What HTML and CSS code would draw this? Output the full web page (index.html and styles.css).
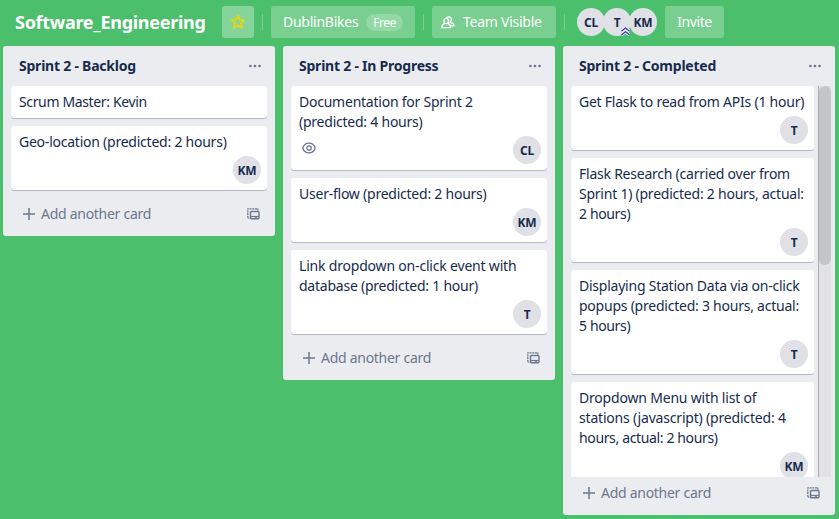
FILE: index.html
```html
<!DOCTYPE html>
<html lang="en">
<head>
<meta charset="utf-8">
<title>Software_Engineering</title>
<link rel="stylesheet" href="styles.css">
</head>
<body>
<svg class="defs" width="0" height="0">
  <symbol id="plus" viewBox="0 0 14 14"><path d="M7 1v12M1 7h12" fill="none" stroke="currentColor" stroke-width="1.5"/></symbol>
  <symbol id="template" viewBox="0 0 13 12"><g fill="none" stroke="currentColor"><path d="M.8 9.800V.8h10v2" stroke-width="1.2" stroke-dasharray="2 .7"/><path d="M.8 10h1.500" stroke-width="1.200"/><rect x="3.500" y="3.500" width="8.500" height="7.300" rx="1" stroke-width="1.4"/><path d="M3.500 8.500h8.500" stroke-width="1.2"/><path d="M8 9.700h2" stroke-width="1"/></g></symbol>
  <symbol id="dots" viewBox="0 0 14 4"><g fill="currentColor"><circle cx="2.4" cy="2" r="1.35"/><circle cx="7" cy="2" r="1.35"/><circle cx="11.6" cy="2" r="1.35"/></g></symbol>
</svg>
<header class="bar">
  <h1 class="board-name">Software_Engineering</h1>
  <button class="btn star"><svg width="16" height="16" viewBox="0 0 16 16"><path d="M8 1.600l1.800 4.200 4.500.4-3.400 3 1.100 4.600L8 11.400l-4 2.400 1.100-4.600-3.400-3 4.500-.4z" fill="none" stroke="#f2d600" stroke-width="1.600" stroke-linejoin="round"/></svg></button>
  <i class="sep"></i>
  <button class="btn org"><span class="org-name">DublinBikes</span><span class="free">Free</span></button>
  <i class="sep"></i>
  <button class="btn team"><svg width="14" height="13" viewBox="0 0 14 13"><g fill="none" stroke="currentColor" stroke-width="1.300" stroke-linejoin="round"><ellipse cx="5.200" cy="5" rx="2.300" ry="2.600"/><path d="M3.800 7.400C1.900 8 .8 9.300.8 11.600h8.800c0-2.300-1.100-3.600-3-4.200"/><path d="M5.300 2.200C6.200.2 10.300.3 10.300 3.500c0 1.300-.4 2.200-1.200 2.800 2.500.6 3.900 1.700 4 3.600H9.500"/></g></svg><span class="team-name">Team Visible</span></button>
  <i class="sep"></i>
  <div class="members">
    <span class="avatar">CL</span>
    <span class="avatar">T<svg class="admin" width="9" height="9" viewBox="0 0 9 9"><path d="M.5 4.300L4.500 1l4 3.300M.5 8L4.500 4.700l4 3.300" fill="none" stroke="#fff" stroke-width="3"/><path d="M.5 4.300L4.500 1l4 3.300M.5 8L4.500 4.700l4 3.300" fill="none" stroke="#3f43bd" stroke-width="1.400"/></svg></span>
    <span class="avatar">KM</span>
  </div>
  <button class="btn invite">Invite</button>
</header>
<main class="board">
  <section class="list">
    <header class="list-head"><h2>Sprint 2 - Backlog</h2><svg width="14" height="4"><use href="#dots"/></svg></header>
    <div class="cards">
      <article class="card"><p><span class="tight">Scrum Master: Kevin</span></p></article>
      <article class="card"><p><span>Geo-location (predicted: 2 hours)</span></p><div class="meta"><span class="avatar">KM</span></div></article>
    </div>
    <footer class="add"><svg width="14" height="14"><use href="#plus"/></svg><span>Add another card</span><svg class="tpl" width="13" height="12"><use href="#template"/></svg></footer>
  </section>
  <section class="list">
    <header class="list-head"><h2>Sprint 2 - In Progress</h2><svg width="14" height="4"><use href="#dots"/></svg></header>
    <div class="cards">
      <article class="card"><p><span>Documentation for Sprint 2</span><span>(predicted: 4 hours)</span></p><div class="meta"><svg class="eye" width="14" height="12" viewBox="0 0 14 12"><g fill="none" stroke="currentColor" stroke-width="1.300"><path d="M.8 6C1.800 2.900 4.100 1.100 7 1.100S12.200 2.900 13.200 6C12.200 9.100 9.900 10.900 7 10.900S1.800 9.100.8 6z"/><circle cx="7" cy="6" r="2.200"/></g></svg><span class="avatar">CL</span></div></article>
      <article class="card"><p><span>User-flow (predicted: 2 hours)</span></p><div class="meta"><span class="avatar">KM</span></div></article>
      <article class="card"><p><span class="loose">Link dropdown on-click event with</span><span>database (predicted: 1 hour)</span></p><div class="meta"><span class="avatar">T</span></div></article>
    </div>
    <footer class="add"><svg width="14" height="14"><use href="#plus"/></svg><span>Add another card</span><svg class="tpl" width="13" height="12"><use href="#template"/></svg></footer>
  </section>
  <section class="list">
    <header class="list-head"><h2>Sprint 2 - Completed</h2><svg width="14" height="4"><use href="#dots"/></svg></header>
    <div class="scroller">
      <div class="cards">
        <article class="card"><p><span>Get Flask to read from APIs (1 hour)</span></p><div class="meta"><span class="avatar">T</span></div></article>
        <article class="card"><p><span>Flask Research (carried over from</span><span>Sprint 1) (predicted: 2 hours, actual:</span><span class="tight">2 hours)</span></p><div class="meta"><span class="avatar">T</span></div></article>
        <article class="card"><p><span>Displaying Station Data via on-click</span><span>popups (predicted: 3 hours, actual:</span><span class="tight">5 hours)</span></p><div class="meta"><span class="avatar">T</span></div></article>
        <article class="card"><p><span class="loose">Dropdown Menu with list of</span><span class="loose">stations (javascript) (predicted: 4</span><span class="tight">hours, actual: 2 hours)</span></p><div class="meta"><span class="avatar">KM</span></div></article>
      </div>
      <div class="track"><div class="thumb"></div></div>
    </div>
    <footer class="add"><svg width="14" height="14"><use href="#plus"/></svg><span>Add another card</span><svg class="tpl" width="13" height="12"><use href="#template"/></svg></footer>
  </section>
</main>
</body>
</html>
```
FILE: styles.css
```css
* { box-sizing: border-box; }
body { margin: 0; height: 519px; overflow: hidden; background: #4bbf6b; color: #172b4d; font: 14px/20px "Noto Sans", "Open Sans", sans-serif; }
h1, h2, p { margin: 0; }
.defs { display: block; position: absolute; }
svg { display: block; flex: none; }
.bar { height: 46px; padding: 6px 0 8px 3px; display: flex; align-items: center; color: #fff; white-space: nowrap; }
.board-name { width: 219px; padding-left: 12px; font-size: 18px; line-height: 32px; font-weight: 700; letter-spacing: -.28px; }
.btn { height: 32px; border: 0; border-radius: 3px; padding: 0 12px; background: #78cf90; color: #fff; font: inherit; line-height: 32px; letter-spacing: -.25px; display: flex; align-items: center; flex: none; }
.star { width: 32px; padding: 0; justify-content: center; background: #87d49b; }
.sep { width: 1px; height: 16px; margin: 0 8px; background: #78cf90; flex: none; }
.org { width: 144px; }
.org-name { width: 83px; text-align: left; }
.free { width: 37px; height: 17px; border-radius: 9px; background: #93d9a6; font-size: 12px; line-height: 17px; letter-spacing: -.5px; text-align: center; flex: none; }
.team { width: 124px; padding-left: 9px; }
.team-name { margin-left: 8px; }
.members { display: flex; margin-left: 4px; width: 88px; }
.avatar { width: 28px; height: 28px; border-radius: 50%; background: #dfe1e6; color: #172b4d; font-size: 12px; line-height: 29px; font-weight: 700; letter-spacing: -.2px; text-align: center; position: relative; flex: none; }
.members .avatar { margin-right: -2px; }
.admin { position: absolute; right: 1px; bottom: 0; }
.invite { width: 59px; padding: 0; justify-content: center; letter-spacing: -.4px; }
.board { display: flex; align-items: flex-start; gap: 8px; padding-left: 3px; }
.list { width: 272px; flex: none; border-radius: 3px; background: #ebecf0; }
.list-head { height: 40px; padding: 0 13px 0 16px; display: flex; align-items: center; justify-content: space-between; color: #6b778c; }
.list-head h2 { color: #172b4d; font-size: 14px; line-height: 20px; font-weight: 700; letter-spacing: -.23px; white-space: nowrap; }
.cards { padding: 0 8px 8px; display: flex; flex-direction: column; gap: 8px; }
.card { padding: 6px; border-radius: 3px; background: #fff; box-shadow: 0 1px 0 #b3bac5; flex: none; }
.card p { padding: 0 2px; letter-spacing: -.235px; }
.card p span { display: block; width: max-content; white-space: nowrap; }
.card p .tight { letter-spacing: -.36px; }
.card p .loose { letter-spacing: -.19px; }
.meta { display: flex; margin-top: 4px; }
.meta .avatar { margin-left: auto; }
.eye { color: #6b778c; margin: 6px 0 0 5px; }
.add { height: 38px; padding: 0 15px 6px 19px; display: flex; align-items: center; color: #6b778c; }
.add span { margin-left: 5px; letter-spacing: -.28px; white-space: nowrap; }
.tpl { margin-left: auto; }
.scroller { height: 391px; overflow: hidden; display: flex; }
.scroller .cards { width: 251px; padding-right: 0; flex: none; }
.track { width: 13px; margin-left: 4px; border-left: 1px solid #aaabae; background: #e2e2e2; }
.thumb { width: 12px; height: 179px; border-radius: 6px; background: #c4c5c7; }
```
